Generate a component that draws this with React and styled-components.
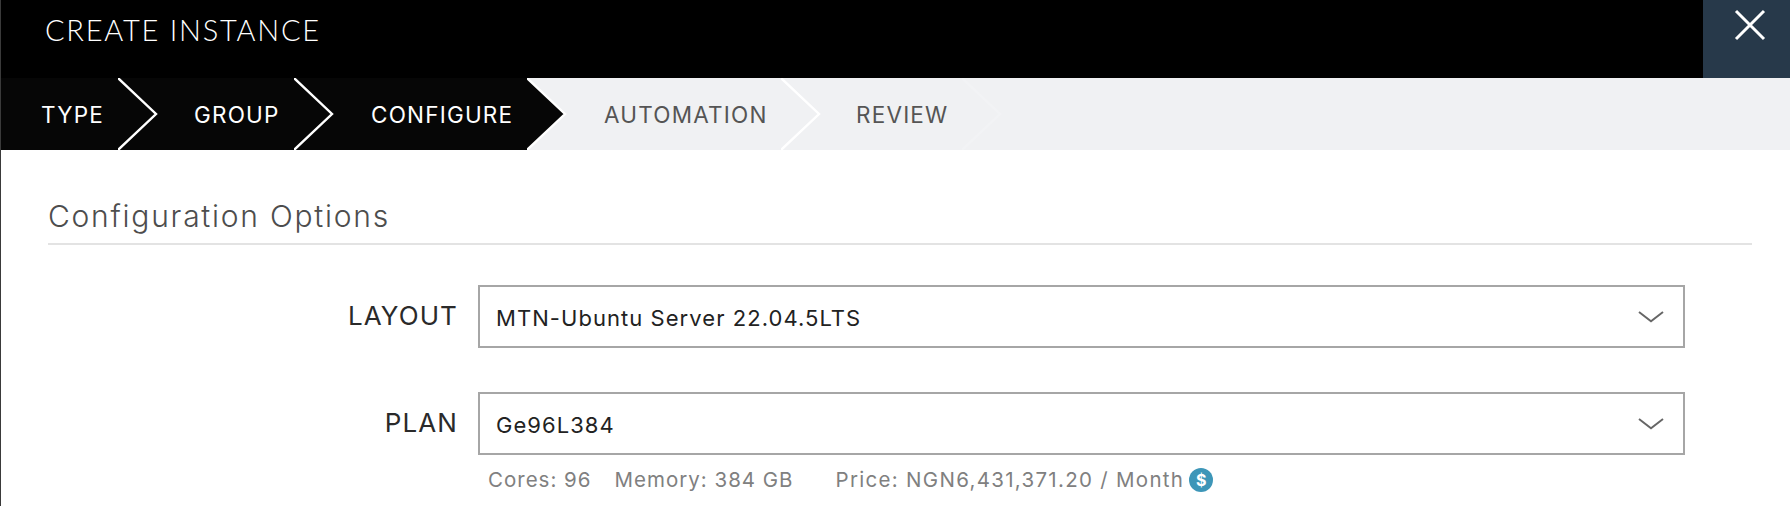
import React from "react";
import styled, { createGlobalStyle } from "styled-components";

const Global = createGlobalStyle`
  html, body { margin: 0; padding: 0; background: #fff; }
  body { width: 1790px; height: 506px; overflow: hidden; font-family: "Inter", "Liberation Sans", sans-serif; }
`;

const Page = styled.div`
  width: 1790px;
  height: 506px;
  overflow: hidden;
  display: flex;
  flex-direction: column;
  box-sizing: border-box;
  border-left: 1px solid #3a3a3a;
`;

const Header = styled.header`
  position: relative;
  height: 78px;
  margin-left: -1px;
  background: #000;
  display: flex;
  justify-content: space-between;
  flex: none;

  &::before {
    content: "";
    position: absolute;
    left: 0;
    bottom: 0;
    width: 1px;
    height: 13px;
    background: #3a2a0c;
  }
`;

const Title = styled.h1`
  margin: 0;
  padding: 14px 0 0 45px;
  font-family: "Lato", sans-serif;
  font-weight: 300;
  font-size: 29px;
  line-height: 32px;
  letter-spacing: 1.75px;
  color: #fff;
`;

const CloseButton = styled.button`
  width: 87px;
  height: 78px;
  border: 0;
  padding: 9px 0 0 7px;
  background: #27394a;
  display: flex;
  justify-content: center;
  align-items: flex-start;
`;

const StepBar = styled.nav`
  height: 72px;
  margin-left: -1px;
  flex: none;
  background: #f0f1f3;
  border-left: 1px solid #3a2a0c;
  display: flex;
`;

const Step = styled.div`
  position: relative;
  width: ${p => p.$width}px;
  padding-left: ${p => p.$pad}px;
  box-sizing: border-box;
  z-index: ${p => p.$z};
  background: ${p => (p.$done ? "#060606" : "transparent")};
  color: ${p => (p.$done ? "#fff" : "#555")};
  font-size: 22.5px;
  letter-spacing: 1.2px;
  line-height: 73px;
  white-space: nowrap;
`;

const Arrow = styled.svg`
  position: absolute;
  left: 100%;
  top: 0;
  width: 42px;
  height: 72px;
`;

const Content = styled.main`
  padding: 0 38px 0 47px;
  flex: 1;
`;

const SectionTitle = styled.h2`
  margin: 0;
  padding: 50px 0 11px;
  font-weight: 300;
  font-size: 30px;
  line-height: 32px;
  letter-spacing: 1.75px;
  color: #4d4d4d;
  border-bottom: 2px solid #e3e3e3;
`;

const FormRow = styled.div`
  display: grid;
  grid-template-columns: 410px 1207px;
  column-gap: 20px;
  align-items: start;
  margin-top: ${p => p.$top}px;
`;

const Label = styled.label`
  text-align: right;
  font-size: 26px;
  font-weight: 400;
  line-height: 32px;
  padding-top: 15px;
  color: #2a2a2a;
  letter-spacing: 1.1px;
`;

const Select = styled.div`
  height: 63px;
  box-sizing: border-box;
  border: 2px solid #a6a6a6;
  display: flex;
  align-items: center;
  justify-content: space-between;
  padding: 0 18px 0 16px;
`;

const SelectValue = styled.span`
  padding-top: 3px;
  font-size: 22px;
  color: #222;
  letter-spacing: 1.05px;
`;

const Details = styled.div`
  grid-column: 2;
  display: flex;
  align-items: center;
  padding: 13px 0 0 10px;
  height: 36px;
  box-sizing: border-box;
  font-size: 20.5px;
  color: #808080;
  white-space: nowrap;
`;

const Detail = styled.span`
  margin-right: ${p => p.$gap}px;
  letter-spacing: ${p => p.$track}px;
`;

const PriceIcon = styled.span`
  width: 24px;
  height: 24px;
  margin-left: -1px;
  border-radius: 50%;
  background: #3d96b8;
  color: #fff;
  font-size: 16px;
  font-weight: 700;
  line-height: 24px;
  text-align: center;
`;

const steps = [
  { name: "TYPE", width: 117, pad: 40, done: true, stroke: "#fff" },
  { name: "GROUP", width: 176, pad: 76, done: true, stroke: "#fff" },
  { name: "CONFIGURE", width: 233, pad: 77, done: true, stroke: "#fff", solid: true },
  { name: "AUTOMATION", width: 254, pad: 77, stroke: "#fff" },
  { name: "REVIEW", width: 181, pad: 75, stroke: "#f2f3f5" },
];

const Chevron = () => (
  <svg width="28" height="18" viewBox="0 0 28 18" fill="none" stroke="#666" strokeWidth="2">
    <path d="M2 4 L14 13.2 L26 4" />
  </svg>
);

export default function App() {
  return (
    <Page>
      <Global />
      <Header>
        <Title>CREATE INSTANCE</Title>
        <CloseButton aria-label="Close">
          <svg width="32" height="32" viewBox="0 0 32 32" stroke="#fff" strokeWidth="3">
            <path d="M2 2 L30 30 M30 2 L2 30" />
          </svg>
        </CloseButton>
      </Header>
      <StepBar>
        {steps.map((s, i) => (
          <Step key={s.name} $width={s.width} $pad={s.pad} $done={s.done} $z={10 - i}>
            {s.name}
            <Arrow viewBox="0 0 42 72">
              {s.solid && <path d="M0 0 L38 36 L0 72 Z" fill="#060606" />}
              <path d="M0 0 L38 36 L0 72" fill="none" stroke={s.stroke} strokeWidth="2.4" />
            </Arrow>
          </Step>
        ))}
      </StepBar>
      <Content>
        <SectionTitle>Configuration Options</SectionTitle>
        <FormRow $top={40}>
          <Label>LAYOUT</Label>
          <Select>
            <SelectValue>MTN-Ubuntu Server 22.04.5LTS</SelectValue>
            <Chevron />
          </Select>
        </FormRow>
        <FormRow $top={44}>
          <Label>PLAN</Label>
          <Select>
            <SelectValue>Ge96L384</SelectValue>
            <Chevron />
          </Select>
          <Details>
            <Detail $gap={23} $track={1}>Cores: 96</Detail>
            <Detail $gap={42} $track={1}>Memory: 384 GB</Detail>
            <Detail $gap={6} $track={1.3}>Price: NGN6,431,371.20 / Month</Detail>
            <PriceIcon>$</PriceIcon>
          </Details>
        </FormRow>
      </Content>
    </Page>
  );
}
